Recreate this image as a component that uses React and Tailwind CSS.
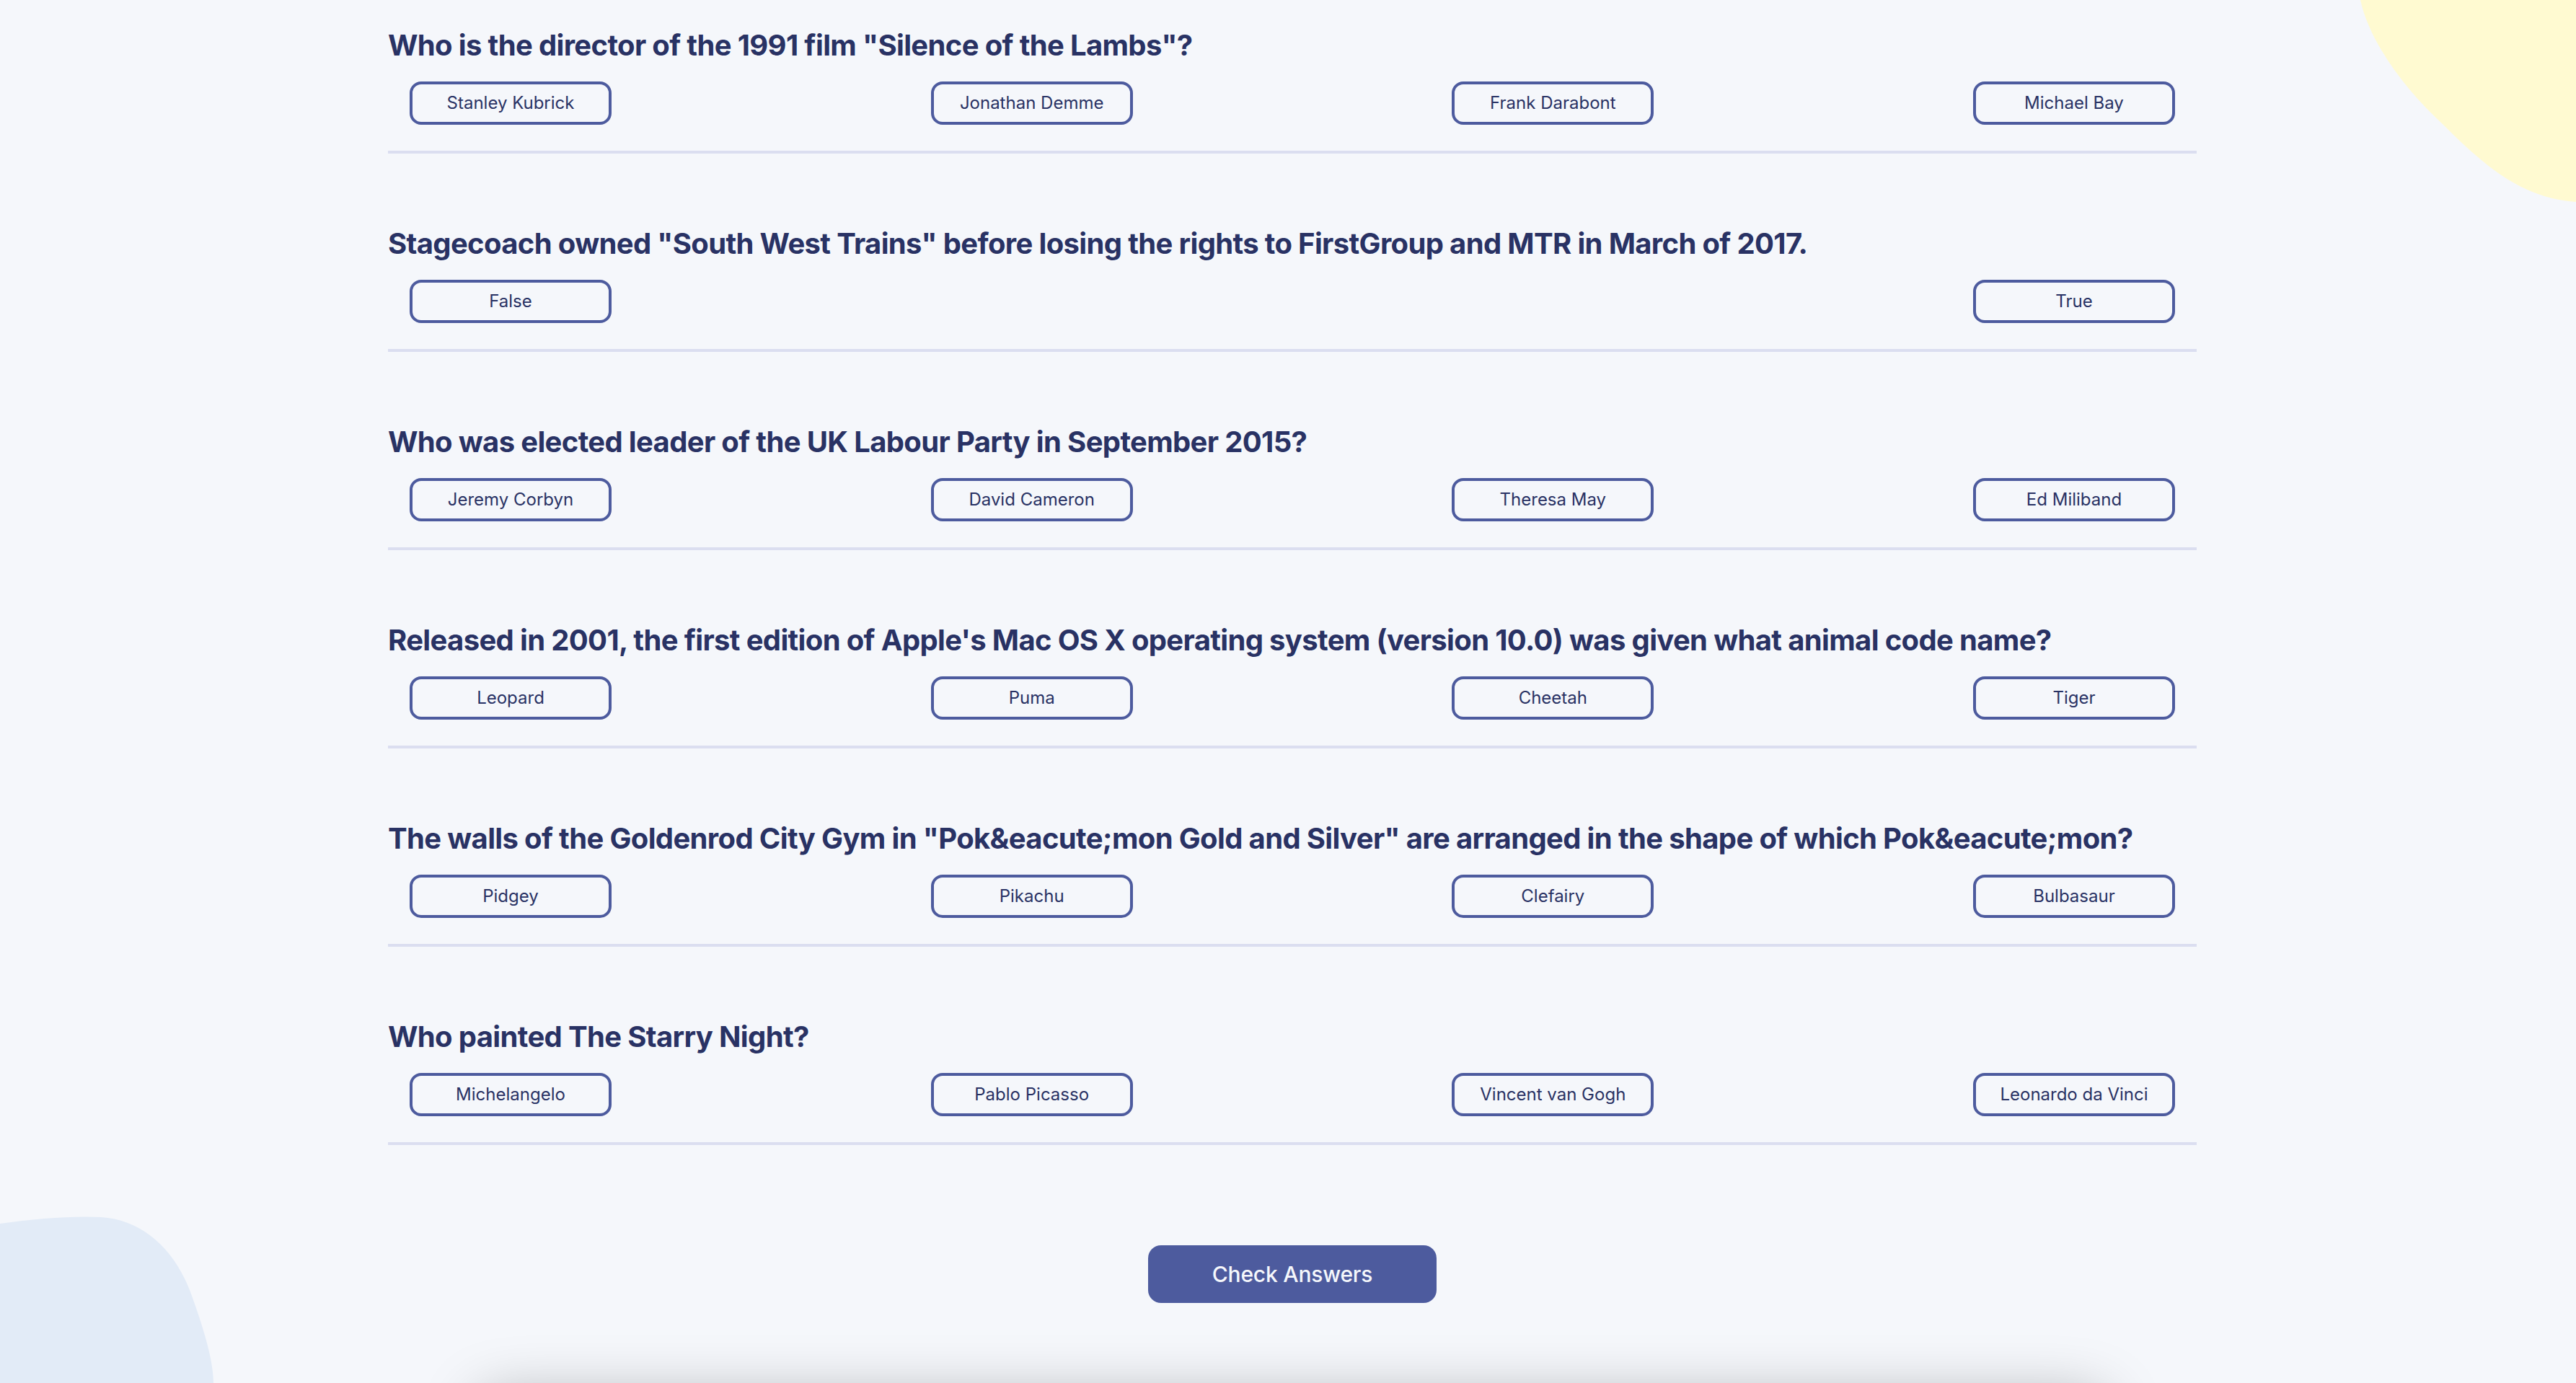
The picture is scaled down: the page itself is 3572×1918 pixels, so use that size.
import React from "react";

const questions = [
  {
    q: 'Who is the director of the 1991 film "Silence of the Lambs"?',
    a: ["Stanley Kubrick", "Jonathan Demme", "Frank Darabont", "Michael Bay"],
  },
  {
    q: 'Stagecoach owned "South West Trains" before losing the rights to FirstGroup and MTR in March of 2017.',
    a: ["False", "True"],
  },
  {
    q: "Who was elected leader of the UK Labour Party in September 2015?",
    a: ["Jeremy Corbyn", "David Cameron", "Theresa May", "Ed Miliband"],
  },
  {
    q: "Released in 2001, the first edition of Apple's Mac OS X operating system (version 10.0) was given what animal code name?",
    a: ["Leopard", "Puma", "Cheetah", "Tiger"],
  },
  {
    q: 'The walls of the Goldenrod City Gym in "Pok&eacute;mon Gold and Silver" are arranged in the shape of which Pok&eacute;mon?',
    a: ["Pidgey", "Pikachu", "Clefairy", "Bulbasaur"],
  },
  {
    q: "Who painted The Starry Night?",
    a: ["Michelangelo", "Pablo Picasso", "Vincent van Gogh", "Leonardo da Vinci"],
  },
];

export default function App() {
  return (
    <div
      className="relative h-[1918px] overflow-hidden bg-[#F5F7FB] text-[#293264]"
      style={{ fontFamily: "Inter, 'Noto Sans', sans-serif" }}
    >
      <svg
        className="absolute right-0 top-0"
        width="372"
        height="320"
        viewBox="0 0 372 320"
      >
        <path
          d="M73 0 C85 55, 130 120, 190 175 C250 235, 300 275, 372 280 L372 0 Z"
          fill="#FFFAD1"
        />
      </svg>
      <svg
        className="absolute bottom-0 left-0"
        width="400"
        height="278"
        viewBox="0 0 400 278"
      >
        <path
          d="M0 57 C50 50, 100 46, 140 48 C200 52, 245 95, 267 160 C285 210, 296 250, 296 278 L0 278 Z"
          fill="#E2EBF7"
        />
      </svg>

      <div className="relative ml-[538px] w-[2508px] pt-[39px]">
        {questions.map((item, i) => (
          <div
            key={i}
            className={
              "border-b-4 border-[#DBDEF0] pb-[36px] " +
              (i === 0 ? "" : "pt-[101px]")
            }
          >
            <h2 className="text-[40px] font-bold leading-[48px] tracking-[-0.65px]">
              {item.q}
            </h2>
            <div className="mt-[26px] flex justify-between px-[30px]">
              {item.a.map((ans) => (
                <button
                  key={ans}
                  className="flex h-[60px] w-[280px] items-center justify-center rounded-[16px] border-4 border-[#4D5B9E] text-[24px] leading-none text-[#293264]"
                >
                  {ans}
                </button>
              ))}
            </div>
          </div>
        ))}
        <div className="mt-[139px] flex justify-center">
          <button className="flex h-[80px] w-[400px] items-center justify-center rounded-[18px] bg-[#4D5B9E] text-[30px] font-medium tracking-[-0.2px] text-[#F5F7FB]">
            Check Answers
          </button>
        </div>
        <div className="mx-auto mt-[128px] h-[400px] w-[2260px] rounded-[30px] bg-[#F5F7FB] shadow-[0_0_80px_rgba(0,0,0,0.28)]" />
      </div>
    </div>
  );
}
